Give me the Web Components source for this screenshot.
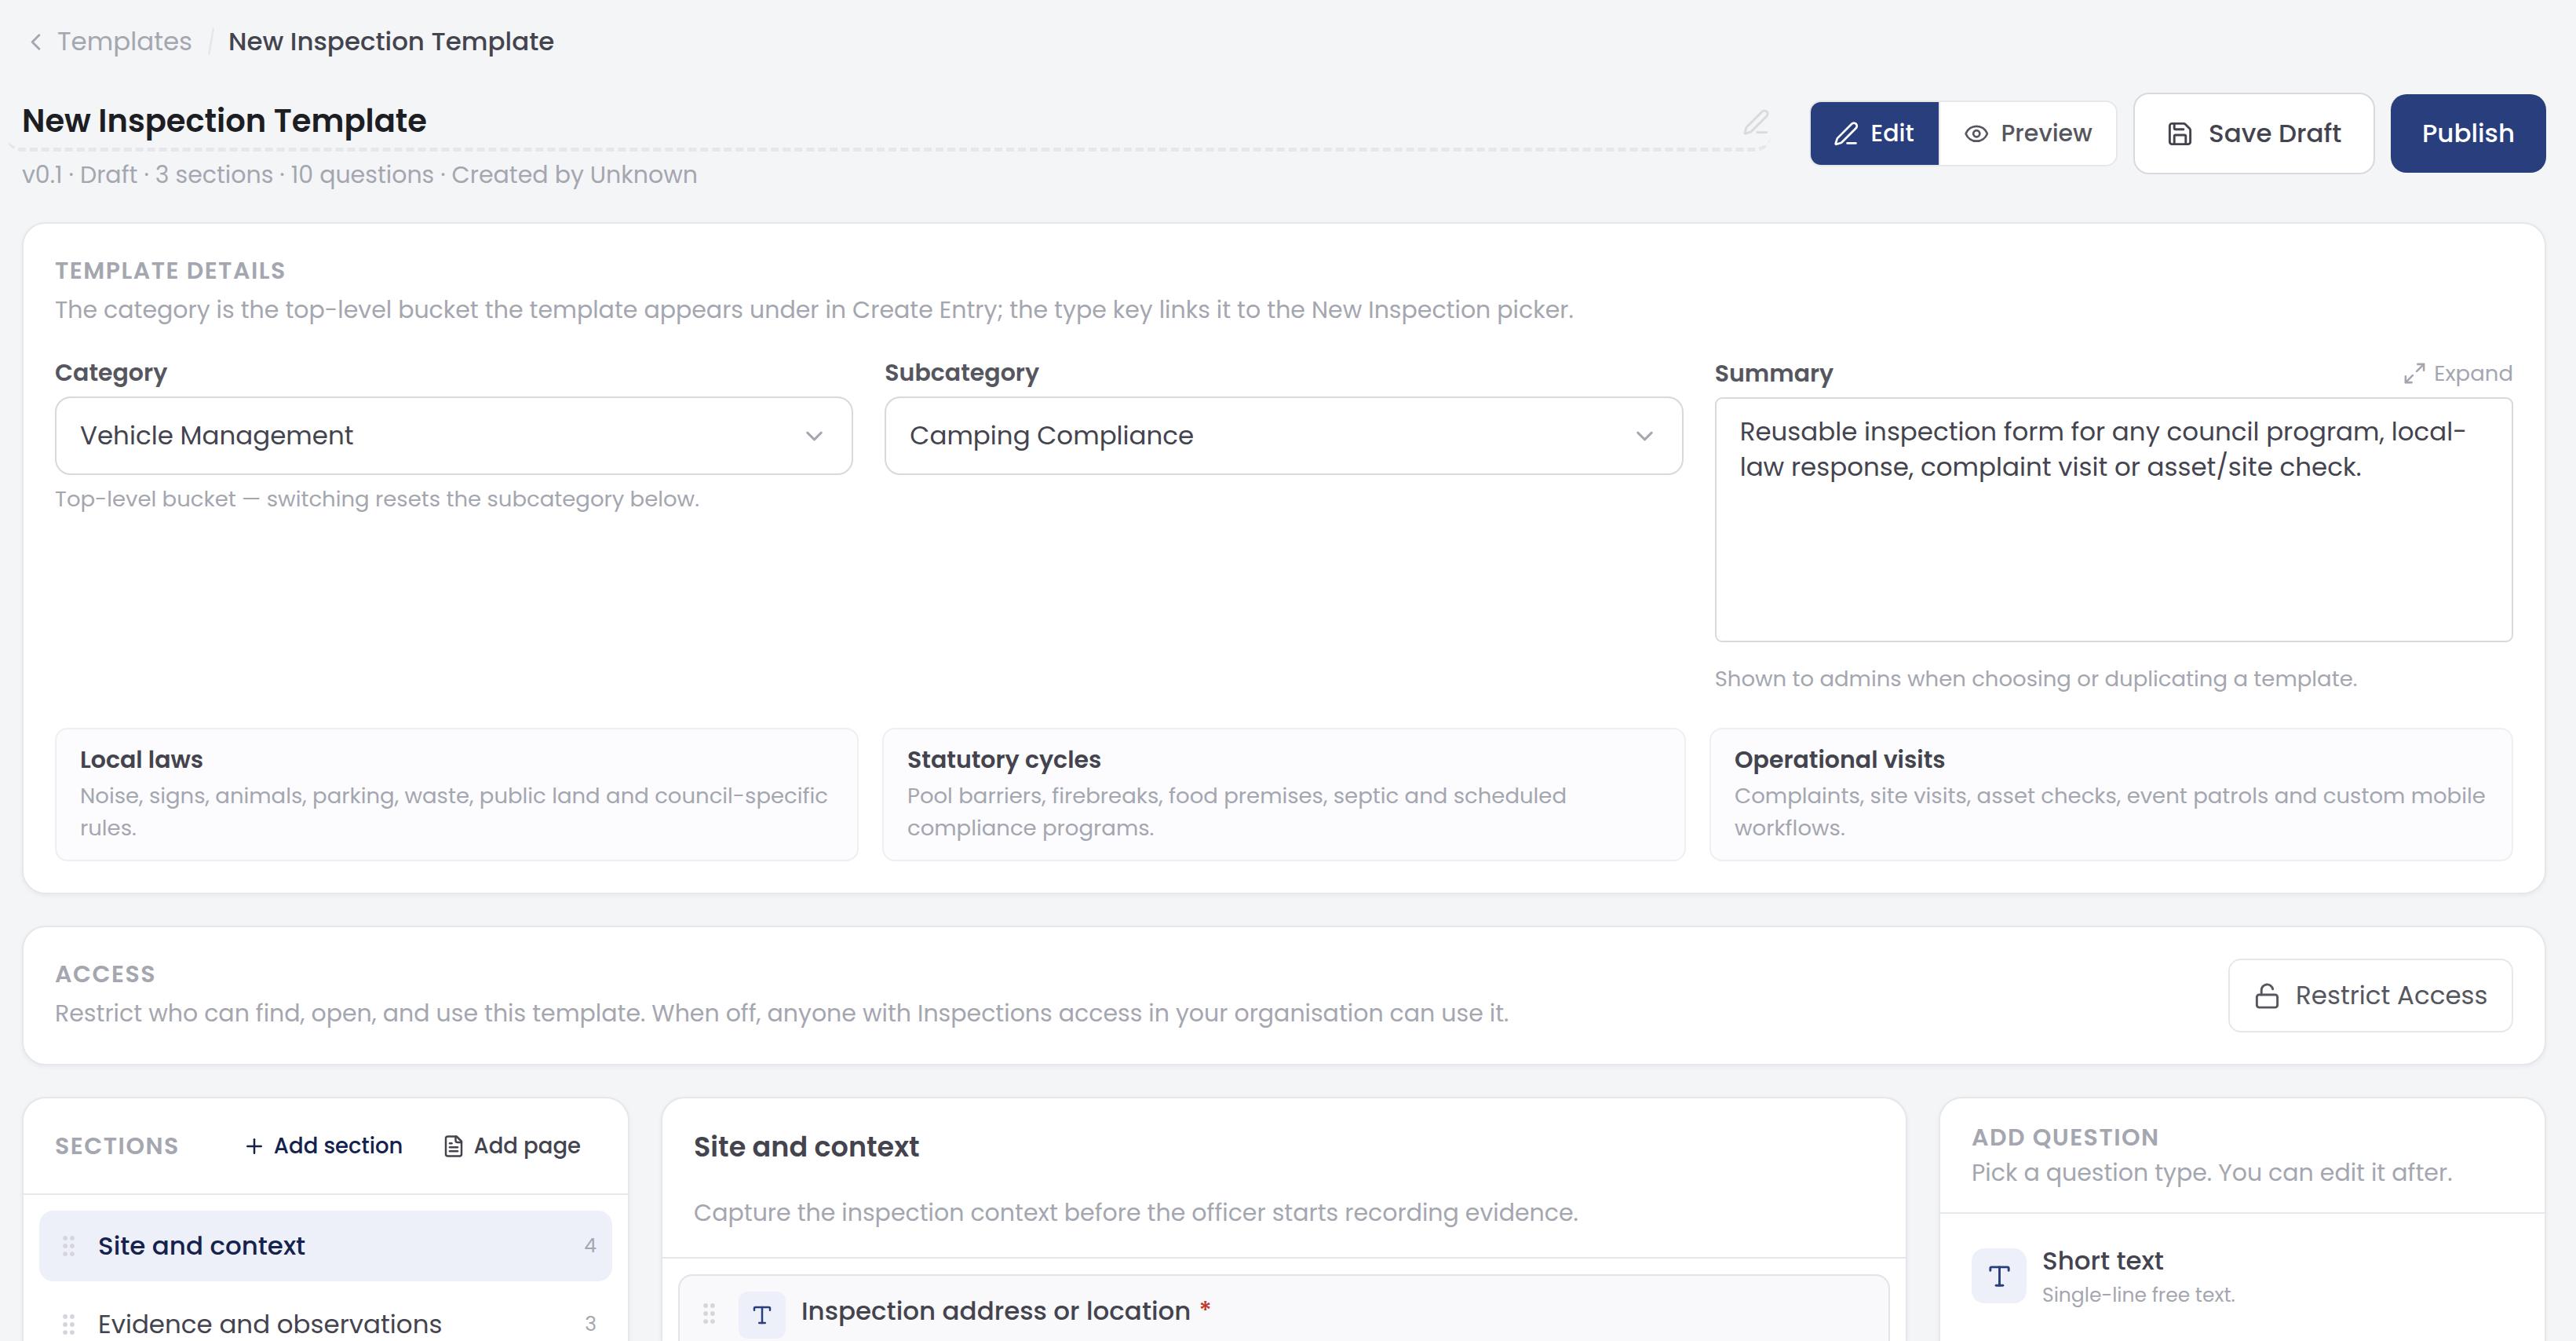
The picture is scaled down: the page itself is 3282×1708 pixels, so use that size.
<!DOCTYPE html>
<html lang="en">
<head>
<meta charset="utf-8">
<title>New Inspection Template</title>
<style>
  html, body {
    margin: 0;
    height: 1708px;
    overflow: hidden;
    background: #f4f5f7;
  }

  body {
    --line: #e6e7ea;
    --line-strong: #d8d9de;
    --muted: #a4a6b0;
    --ink: #44444f;
    --ink-soft: #56565f;
    --navy: #14224d;
    --brand: #293e7d;
    --tint: #edf0f9;
    color: var(--ink);
    font-family: Poppins, Inter, "Open Sans", sans-serif;
    font-size: 32.5px;
  }
</style>
</head>
<body>
<template-editor></template-editor>

<script>
const ICONS = {
  back: '<path d="m15 18-6-6 6-6"/>',
  chevron: '<path d="m6 9 6 6 6-6"/>',
  pen: '<path d="M13 21h8"/><path d="M21.174 6.812a1 1 0 0 0-3.986-3.987L3.842 16.174a2 2 0 0 0-.5.83l-1.321 4.352a.5.5 0 0 0 .623.622l4.353-1.32a2 2 0 0 0 .83-.497z"/>',
  eye: '<path d="M2.062 12.348a1 1 0 0 1 0-.696 10.75 10.75 0 0 1 19.876 0 1 1 0 0 1 0 .696 10.75 10.75 0 0 1-19.876 0"/><circle cx="12" cy="12" r="3"/>',
  save: '<path d="M15.2 3a2 2 0 0 1 1.4.6l3.8 3.8a2 2 0 0 1 .6 1.4V19a2 2 0 0 1-2 2H5a2 2 0 0 1-2-2V5a2 2 0 0 1 2-2z"/><path d="M17 21v-7a1 1 0 0 0-1-1H8a1 1 0 0 0-1 1v7"/><path d="M7 3v4a1 1 0 0 0 1 1h7"/>',
  expand: '<path d="M15 3h6v6"/><path d="m21 3-7 7"/><path d="m3 21 7-7"/><path d="M9 21H3v-6"/>',
  unlock: '<rect width="18" height="11" x="3" y="11" rx="2"/><path d="M7 11V7a5 5 0 0 1 9.9-1"/>',
  plus: '<path d="M5 12h14"/><path d="M12 5v14"/>',
  page: '<path d="M15 2H6a2 2 0 0 0-2 2v16a2 2 0 0 0 2 2h12a2 2 0 0 0 2-2V7z"/><path d="M14 2v4a2 2 0 0 0 2 2h4"/><path d="M10 9H8"/><path d="M16 13H8"/><path d="M16 17H8"/>',
  type: '<path d="M12 4v16"/><path d="M4 7V5a1 1 0 0 1 1-1h14a1 1 0 0 1 1 1v2"/><path d="M9 20h6"/>'
};

class BaseElement extends HTMLElement {
  constructor() {
    super();
    const tpl = document.createElement('template');
    tpl.innerHTML = this.constructor.markup;
    this.attachShadow({ mode: 'open' }).appendChild(tpl.content.cloneNode(true));
  }
}

class UiIcon extends BaseElement {
  static markup = `
    <style>
      :host { display: block; flex: none; }
      svg { display: block; fill: none; stroke: currentColor; stroke-width: 2; stroke-linecap: round; stroke-linejoin: round; }
    </style>
    <svg viewBox="0 0 24 24"></svg>`;

  connectedCallback() {
    const svg = this.shadowRoot.querySelector('svg');
    const size = this.getAttribute('size') || 35;
    svg.setAttribute('width', size);
    svg.setAttribute('height', size);
    svg.innerHTML = ICONS[this.getAttribute('name')] || '';
  }
}

class DragGrip extends BaseElement {
  static markup = `
    <style>
      :host { display: block; flex: none; color: #d5d6dc; }
      svg { display: block; fill: currentColor; }
    </style>
    <svg width="15" height="26" viewBox="0 0 15 26">
      <circle cx="3.1" cy="2.9" r="2.9"/><circle cx="11.9" cy="2.9" r="2.9"/>
      <circle cx="3.1" cy="13" r="2.9"/><circle cx="11.9" cy="13" r="2.9"/>
      <circle cx="3.1" cy="23.1" r="2.9"/><circle cx="11.9" cy="23.1" r="2.9"/>
    </svg>`;
}

class TextLine extends BaseElement {
  static markup = `
    <style>
      :host { display: block; flex: none; width: max-content; white-space: nowrap; }
    </style>
    <slot></slot>`;
}

class UiCard extends BaseElement {
  static markup = `
    <style>
      :host {
        display: block;
        box-sizing: border-box;
        border: 2px solid var(--line);
        border-radius: 30px;
        background: #fff;
        box-shadow: 0 2px 6px rgba(20, 24, 50, 0.05);
      }
    </style>
    <slot></slot>`;
}

class CardHeading extends BaseElement {
  static markup = `
    <style>
      :host { display: block; color: var(--muted); }
      .title { font-size: 30px; font-weight: 600; line-height: 39px; height: 39px; letter-spacing: 0.05em; }
      .text { font-size: 30px; line-height: 52px; height: 50px; margin-top: var(--heading-gap, 5px); }
    </style>
    <div class="title"><slot name="title"></slot></div>
    <div class="text"><slot></slot></div>`;
}

class SelectField extends BaseElement {
  static markup = `
    <style>
      :host { display: block; }
      .label { font-size: 30px; font-weight: 600; line-height: 40px; color: var(--ink-soft); margin-bottom: 10px; }
      .box {
        display: flex;
        align-items: center;
        justify-content: space-between;
        box-sizing: border-box;
        height: 100px;
        padding: 0 30px;
        border: 2px solid var(--line-strong);
        border-radius: 20px;
        background: #fff;
      }
      ui-icon { color: var(--muted); }
      .hint { margin-top: 10.5px; font-size: 27.5px; line-height: 40px; color: var(--muted); }
    </style>
    <div class="label"><slot name="label"></slot></div>
    <div class="box"><slot></slot><ui-icon name="chevron"></ui-icon></div>
    <div class="hint"><slot name="hint"></slot></div>`;
}

class SummaryField extends BaseElement {
  static markup = `
    <style>
      :host { display: block; }
      .top { display: flex; justify-content: space-between; align-items: center; height: 41px; margin-bottom: 10px; }
      .label { font-size: 30px; font-weight: 600; color: var(--ink-soft); }
      .expand { display: flex; align-items: center; gap: 9px; font-size: 27.5px; color: var(--muted); }
      .area {
        box-sizing: border-box;
        height: 312px;
        padding: 18.5px 30px;
        border: 2px solid var(--line-strong);
        border-radius: 9px;
        line-height: 45.5px;
        background: #fff;
      }
      .hint { margin-top: 26.5px; font-size: 27.5px; line-height: 40px; color: var(--muted); }
    </style>
    <div class="top">
      <div class="label"><text-line>Summary</text-line></div>
      <div class="expand"><ui-icon name="expand" size="31"></ui-icon><text-line>Expand</text-line></div>
    </div>
    <div class="area">
      <text-line>Reusable inspection form for any council program, local-</text-line>
      <text-line>law response, complaint visit or asset/site check.</text-line>
    </div>
    <div class="hint"><text-line>Shown to admins when choosing or duplicating a template.</text-line></div>`;
}

class InfoBox extends BaseElement {
  static markup = `
    <style>
      :host {
        display: block;
        box-sizing: border-box;
        height: 170px;
        padding: 19px 30px;
        border: 2px solid #eeeff2;
        border-radius: 16px;
        background: #fcfcfe;
      }
      .title { font-size: 30px; font-weight: 600; line-height: 40px; margin-bottom: 5px; }
      .text { font-size: 27.5px; line-height: 41.25px; color: var(--muted); }
    </style>
    <div class="title"><slot name="title"></slot></div>
    <div class="text"><slot></slot></div>`;
}

class CrumbBar extends BaseElement {
  static markup = `
    <style>
      :host { display: flex; align-items: center; height: 46px; padding: 30px 0 0; color: var(--muted); }
      ui-icon { margin-right: 10px; }
      svg { margin: 0 18px 0 20px; }
      .current { font-weight: 500; color: var(--ink); }
    </style>
    <ui-icon name="back"></ui-icon>
    <text-line>Templates</text-line>
    <svg width="8" height="36" viewBox="0 0 8 36"><path d="M7 1 1 35" fill="none" stroke="#e5e6ea" stroke-width="2.4"/></svg>
    <text-line class="current">New Inspection Template</text-line>`;
}

class EditorHeader extends BaseElement {
  static markup = `
    <style>
      :host { display: flex; justify-content: space-between; height: 139px; margin: 37px 0 31px; }
      .title {
        display: flex;
        justify-content: space-between;
        align-items: center;
        box-sizing: border-box;
        width: 2248px;
        height: 80px;
        margin-left: -20px;
        padding: 6px 1px 0 20px;
        border-bottom: 5px dashed #e6e7ea;
        border-radius: 20px;
        color: #1d1e24;
        font-size: 40px;
        font-weight: 600;
      }
      .title ui-icon { color: #d9dade; margin-top: 4px; }
      .meta { font-size: 30px; line-height: 60px; color: var(--muted); }
      .actions { display: flex; align-items: center; gap: 20px; height: 104px; margin-top: 5px; }
      .tabs {
        display: flex;
        box-sizing: border-box;
        width: 393px;
        height: 84px;
        border: 2px solid var(--line);
        border-radius: 15px;
        overflow: hidden;
        background: #fff;
        font-size: 30px;
        font-weight: 500;
      }
      .tab { display: flex; align-items: center; gap: 15px; box-sizing: border-box; color: var(--ink-soft); padding-left: 30px; }
      .tab.on { width: 163px; padding-left: 29px; background: var(--brand); color: #fff; }
      .tab + .tab { border-left: 2px solid var(--line); }
      .btn { display: flex; align-items: center; box-sizing: border-box; border-radius: 20px; font-weight: 500; }
      .save { width: 308px; height: 104px; padding-left: 40px; gap: 19px; border: 2px solid var(--line-strong); background: #fff; }
      .publish { width: 198px; height: 100px; justify-content: center; background: var(--brand); color: #fff; }
    </style>
    <div>
      <div class="title"><text-line>New Inspection Template</text-line><ui-icon name="pen"></ui-icon></div>
      <text-line class="meta">v0.1 · Draft · 3 sections · 10 questions · Created by Unknown</text-line>
    </div>
    <div class="actions">
      <div class="tabs">
        <div class="tab on"><ui-icon name="pen" size="32.5"></ui-icon><text-line>Edit</text-line></div>
        <div class="tab"><ui-icon name="eye" size="32.5"></ui-icon><text-line>Preview</text-line></div>
      </div>
      <div class="btn save"><ui-icon name="save"></ui-icon><text-line>Save Draft</text-line></div>
      <div class="btn publish"><text-line>Publish</text-line></div>
    </div>`;
}

class TemplateDetails extends BaseElement {
  static markup = `
    <style>
      :host { display: block; }
      ui-card { height: 856px; padding: 40px; }
      .fields { display: grid; grid-template-columns: repeat(3, 1fr); gap: 40px; margin: 36px 0 42.5px; }
      .boxes { display: grid; grid-template-columns: repeat(3, 1fr); gap: 30px; }
    </style>
    <ui-card>
      <card-heading>
        <text-line slot="title">TEMPLATE DETAILS</text-line>
        <text-line>The category is the top-level bucket the template appears under in Create Entry; the type key links it to the New Inspection picker.</text-line>
      </card-heading>
      <div class="fields">
        <select-field>
          <text-line slot="label">Category</text-line>
          <text-line>Vehicle Management</text-line>
          <text-line slot="hint">Top-level bucket — switching resets the subcategory below.</text-line>
        </select-field>
        <select-field>
          <text-line slot="label">Subcategory</text-line>
          <text-line>Camping Compliance</text-line>
        </select-field>
        <summary-field></summary-field>
      </div>
      <div class="boxes">
        <info-box>
          <text-line slot="title">Local laws</text-line>
          <text-line>Noise, signs, animals, parking, waste, public land and council-specific</text-line>
          <text-line>rules.</text-line>
        </info-box>
        <info-box>
          <text-line slot="title">Statutory cycles</text-line>
          <text-line>Pool barriers, firebreaks, food premises, septic and scheduled</text-line>
          <text-line>compliance programs.</text-line>
        </info-box>
        <info-box>
          <text-line slot="title">Operational visits</text-line>
          <text-line>Complaints, site visits, asset checks, event patrols and custom mobile</text-line>
          <text-line>workflows.</text-line>
        </info-box>
      </div>
    </ui-card>`;
}

class AccessPanel extends BaseElement {
  static markup = `
    <style>
      :host { display: block; }
      ui-card { display: flex; justify-content: space-between; height: 178px; padding: 40px; }
      .restrict {
        display: flex;
        align-items: center;
        gap: 19px;
        box-sizing: border-box;
        width: 363px;
        height: 94px;
        padding-left: 30px;
        border: 2px solid var(--line);
        border-radius: 16px;
        color: var(--ink-soft);
      }
    </style>
    <ui-card>
      <card-heading>
        <text-line slot="title">ACCESS</text-line>
        <text-line>Restrict who can find, open, and use this template. When off, anyone with Inspections access in your organisation can use it.</text-line>
      </card-heading>
      <div class="restrict"><ui-icon name="unlock"></ui-icon><text-line>Restrict Access</text-line></div>
    </ui-card>`;
}

class SectionRow extends BaseElement {
  static markup = `
    <style>
      :host { display: flex; align-items: center; height: 90px; padding: 0 20px 0 30px; border-radius: 18px; }
      :host([active]) { background: var(--tint); color: var(--navy); font-weight: 500; }
      .name { flex: 1; margin-left: 30px; }
      .count { font-size: 25px; font-weight: 400; color: var(--muted); margin-top: -1px; }
    </style>
    <drag-grip></drag-grip>
    <div class="name"><slot></slot></div>
    <div class="count"><slot name="count"></slot></div>`;
}

class SectionsPanel extends BaseElement {
  static markup = `
    <style>
      :host { display: block; }
      ui-card { height: 311px; border-bottom: 0; border-radius: 30px 30px 0 0; overflow: hidden; }
      header { display: flex; align-items: center; height: 121px; padding: 0 60px 0 40px; border-bottom: 2px solid var(--line); }
      .title { font-size: 30px; font-weight: 600; letter-spacing: 0.05em; color: var(--muted); margin-right: auto; }
      .add { display: flex; align-items: center; gap: 10px; font-size: 27.5px; font-weight: 500; }
      .add.section { color: var(--navy); margin-right: 50px; }
      .list { display: flex; flex-direction: column; gap: 10px; padding: 20px; }
    </style>
    <ui-card>
      <header>
        <text-line class="title">SECTIONS</text-line>
        <div class="add section"><ui-icon name="plus" size="30"></ui-icon><text-line>Add section</text-line></div>
        <div class="add"><ui-icon name="page" size="30"></ui-icon><text-line>Add page</text-line></div>
      </header>
      <div class="list">
        <section-row active><text-line>Site and context</text-line><span slot="count">4</span></section-row>
        <section-row><text-line>Evidence and observations</text-line><span slot="count">3</span></section-row>
      </div>
    </ui-card>`;
}

class QuestionsPanel extends BaseElement {
  static markup = `
    <style>
      :host { display: block; }
      ui-card { height: 311px; border-bottom: 0; border-radius: 30px 30px 0 0; overflow: hidden; }
      header { box-sizing: border-box; height: 204px; padding: 40px 40px 0; border-bottom: 2px solid var(--line); }
      .title { font-size: 35px; font-weight: 600; line-height: 44px; }
      .text { margin-top: 36.5px; font-size: 30px; line-height: 50px; color: var(--muted); }
      .list { padding: 20px 20px 0; }
      .question {
        display: flex;
        align-items: flex-start;
        height: 66px;
        padding: 20px 30px 0;
        border: 2px solid #e3e4e9;
        border-bottom: 0;
        border-radius: 18px 18px 0 0;
        background: #f9f9fb;
      }
      drag-grip { margin-top: 14.5px; }
      .tile { display: grid; place-items: center; width: 60px; height: 60px; margin: 0 20px 0 30px; border-radius: 12px; background: var(--tint); color: var(--brand); }
      .name { display: flex; gap: 10px; margin-top: 3px; line-height: 44px; font-weight: 500; }
      .required { color: #c0392b; }
    </style>
    <ui-card>
      <header>
        <text-line class="title">Site and context</text-line>
        <text-line class="text">Capture the inspection context before the officer starts recording evidence.</text-line>
      </header>
      <div class="list">
        <div class="question">
          <drag-grip></drag-grip>
          <div class="tile"><ui-icon name="type" size="30"></ui-icon></div>
          <div class="name"><text-line>Inspection address or location</text-line><span class="required">*</span></div>
        </div>
      </div>
    </ui-card>`;
}

class AddQuestionPanel extends BaseElement {
  static markup = `
    <style>
      :host { display: block; }
      ui-card { height: 311px; border-bottom: 0; border-radius: 30px 30px 0 0; overflow: hidden; }
      header { box-sizing: border-box; height: 147px; padding: 30px 40px 0; border-bottom: 2px solid var(--line); }
      card-heading { --heading-gap: 0px; }
      .type { display: flex; gap: 20px; padding: 44px 40px 0; }
      .tile { display: grid; place-items: center; width: 70px; height: 70px; border-radius: 16px; background: var(--tint); color: var(--brand); }
      .name { font-weight: 500; line-height: 44px; margin-top: -6px; }
      .hint { font-size: 25px; line-height: 43px; color: var(--muted); }
    </style>
    <ui-card>
      <header>
        <card-heading>
          <text-line slot="title">ADD QUESTION</text-line>
          <text-line>Pick a question type. You can edit it after.</text-line>
        </card-heading>
      </header>
      <div class="type">
        <div class="tile"><ui-icon name="type"></ui-icon></div>
        <div>
          <text-line class="name">Short text</text-line>
          <text-line class="hint">Single-line free text.</text-line>
        </div>
      </div>
    </ui-card>`;
}

class TemplateEditor extends BaseElement {
  static markup = `
    <style>
      :host { display: block; padding: 0 38px 0 28px; }
      .stack { display: flex; flex-direction: column; gap: 40px; }
      .columns { display: grid; grid-template-columns: 774px 1fr 774px; gap: 40px; }
    </style>
    <crumb-bar></crumb-bar>
    <editor-header></editor-header>
    <div class="stack">
      <template-details></template-details>
      <access-panel></access-panel>
      <div class="columns">
        <sections-panel></sections-panel>
        <questions-panel></questions-panel>
        <add-question-panel></add-question-panel>
      </div>
    </div>`;
}

customElements.define('ui-icon', UiIcon);
customElements.define('drag-grip', DragGrip);
customElements.define('text-line', TextLine);
customElements.define('ui-card', UiCard);
customElements.define('card-heading', CardHeading);
customElements.define('select-field', SelectField);
customElements.define('summary-field', SummaryField);
customElements.define('info-box', InfoBox);
customElements.define('crumb-bar', CrumbBar);
customElements.define('editor-header', EditorHeader);
customElements.define('template-details', TemplateDetails);
customElements.define('access-panel', AccessPanel);
customElements.define('section-row', SectionRow);
customElements.define('sections-panel', SectionsPanel);
customElements.define('questions-panel', QuestionsPanel);
customElements.define('add-question-panel', AddQuestionPanel);
customElements.define('template-editor', TemplateEditor);
</script>
</body>
</html>
